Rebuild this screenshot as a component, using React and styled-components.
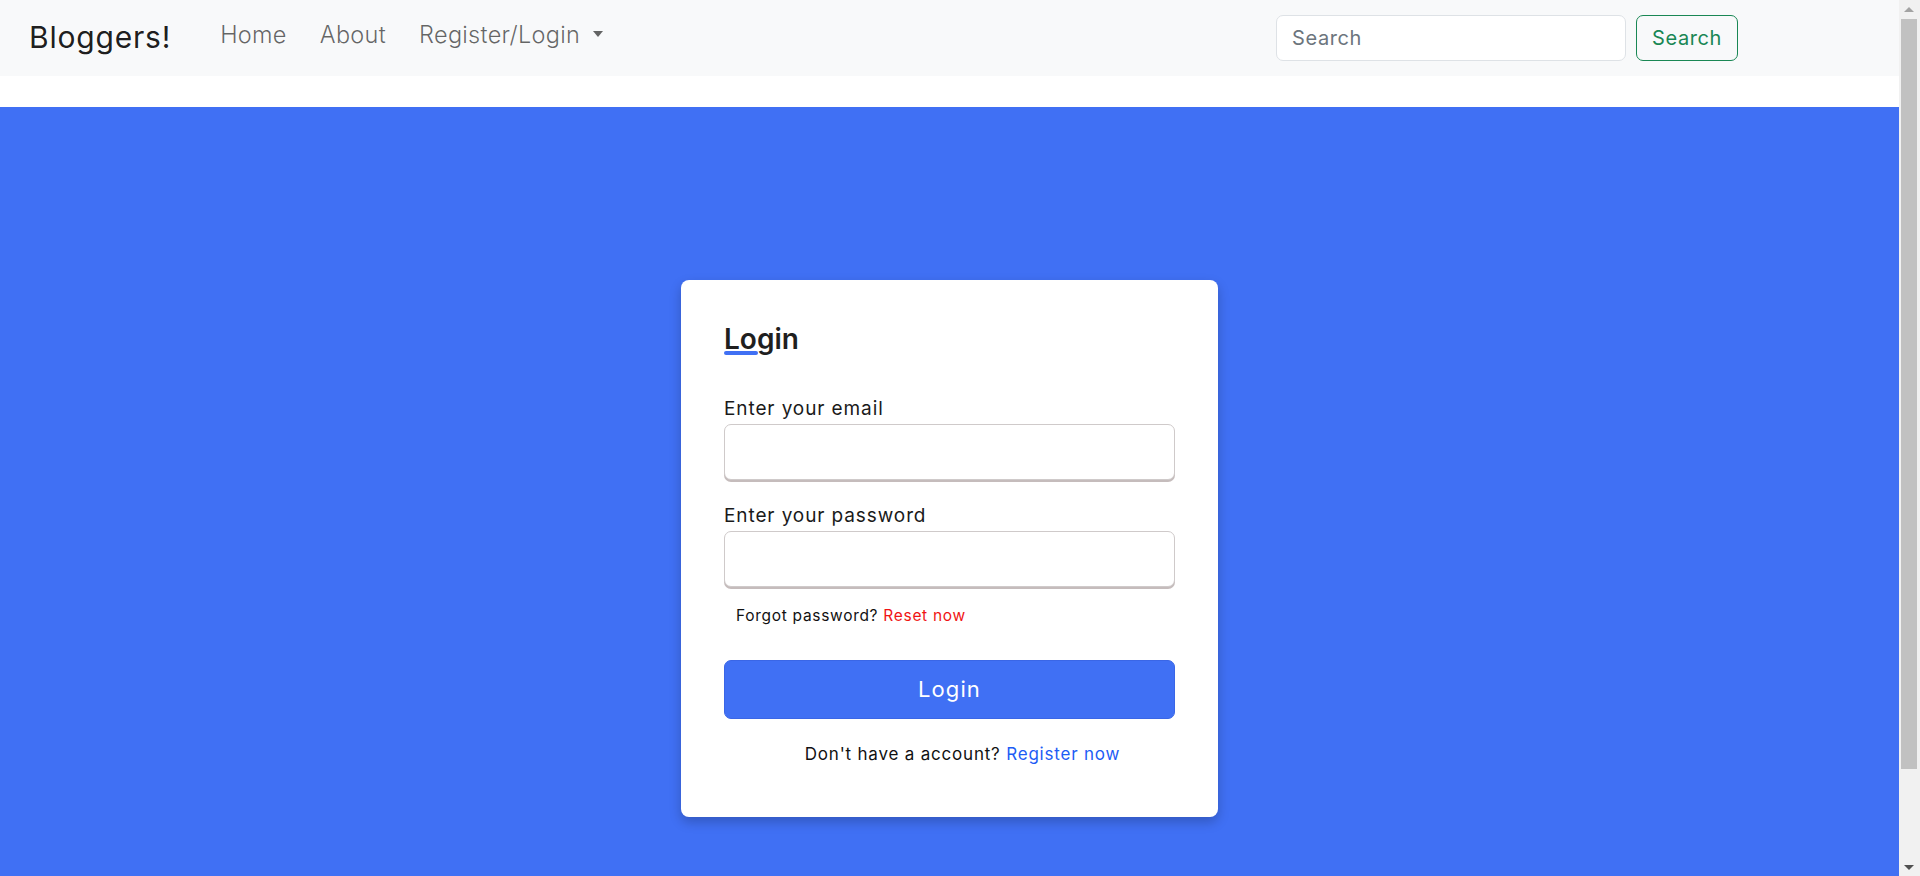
import React from "react";
import styled, { createGlobalStyle } from "styled-components";

const GlobalStyle = createGlobalStyle`
  html, body { margin: 0; padding: 0; }
  body {
    font-family: Inter, "Noto Sans", "Liberation Sans", sans-serif;
    color: #212529;
    background: #fff;
    padding-right: 21px;
  }
  *, *::before, *::after { box-sizing: border-box; }
`;

const Navbar = styled.nav`
  display: flex;
  align-items: center;
  height: 76px;
  padding: 0 161px 0 29px;
  background: #f8f9fa;
`;

const Brand = styled.a`
  font-size: 30px;
  font-weight: 400;
  letter-spacing: 0.8px;
  color: rgba(0, 0, 0, 0.9);
  text-decoration: none;
  margin-right: 49px;
  margin-top: -2px;
`;

const NavList = styled.ul`
  display: flex;
  align-items: center;
  gap: 33px;
  list-style: none;
  margin: -8px 0 0;
  padding: 0;
`;

const NavLink = styled.a`
  display: flex;
  align-items: center;
  font-size: 23.5px;
  font-weight: 300;
  letter-spacing: 0.3px;
  color: rgba(0, 0, 0, 0.6);
  text-decoration: none;
`;

const Caret = styled.span`
  display: inline-block;
  margin-left: 13px;
  width: 0;
  height: 0;
  border-top: 6px solid rgba(0, 0, 0, 0.6);
  border-left: 5.5px solid transparent;
  border-right: 5.5px solid transparent;
`;

const SearchForm = styled.form`
  display: flex;
  gap: 10px;
  margin-left: auto;
  margin-top: -1px;
`;

const SearchInput = styled.input`
  width: 350px;
  height: 46px;
  padding: 0 15px;
  border: 1px solid #dee2e6;
  border-radius: 7px;
  background: #fff;
  font-family: inherit;
  font-size: 20px;
  letter-spacing: 0.6px;
  color: #212529;
  outline: none;
  &::placeholder { color: #6c757d; }
`;

const OutlineButton = styled.button`
  width: 102px;
  height: 46px;
  border: 1px solid #198754;
  border-radius: 7px;
  background: transparent;
  color: #198754;
  font-family: inherit;
  font-size: 20px;
  letter-spacing: 0.6px;
`;

const Hero = styled.section`
  margin-top: 31px;
  padding-top: 6px;
  min-height: 100vh;
  background: #4070f4;
  display: flex;
  align-items: center;
  justify-content: center;
`;

const Card = styled.div`
  width: 537px;
  padding: 42px 43px 52px;
  background: #fff;
  border-radius: 8px;
  box-shadow: 0 5px 12px rgba(0, 0, 0, 0.22);
`;

const Title = styled.h2`
  position: relative;
  margin: 0;
  font-size: 28px;
  line-height: 34px;
  font-weight: 600;
  color: #1f1f1f;
  &::after {
    content: "";
    position: absolute;
    left: 0;
    bottom: 1px;
    width: 34px;
    height: 4px;
    border-radius: 2px;
    background: #4070f4;
  }
`;

const Form = styled.form`
  margin-top: 41px;
  display: flex;
  flex-direction: column;
`;

const Field = styled.div`
  display: flex;
  flex-direction: column;
  margin-top: ${(p) => (p.$first ? "0" : "24px")};
`;

const Label = styled.label`
  font-size: 19px;
  line-height: 24px;
  letter-spacing: 0.9px;
  color: #1a1a1a;
  margin-bottom: 3px;
`;

const TextInput = styled.input`
  height: 56px;
  width: 100%;
  padding: 0 14px;
  border: 1px solid #cfcaca;
  border-radius: 7px;
  box-shadow: 0 2px 0 #c5bcbc;
  font-family: inherit;
  font-size: 18px;
  outline: none;
  background: #fff;
`;

const Helper = styled.p`
  margin: 19px 0 0 12px;
  font-size: 15.5px;
  line-height: 20px;
  letter-spacing: 0.7px;
  color: #111;
`;

const TextLink = styled.a`
  color: ${(p) => p.$color};
  text-decoration: none;
`;

const PrimaryButton = styled.button`
  margin-top: 34px;
  height: 59px;
  width: 100%;
  border: 1px solid #3a66e6;
  border-radius: 7px;
  background: #4070f4;
  color: #fff;
  font-family: inherit;
  font-size: 22px;
  letter-spacing: 1.1px;
  font-weight: 400;
`;

const Footnote = styled.p`
  margin: 24px 0 0;
  padding-left: 26px;
  text-align: center;
  font-size: 17px;
  line-height: 22px;
  letter-spacing: 0.8px;
  color: #111;
`;

const Scrollbar = styled.div`
  position: fixed;
  top: 0;
  right: 0;
  width: 21px;
  height: 100vh;
  background: #f1f1f1;
`;

const Thumb = styled.div`
  position: absolute;
  top: 19px;
  left: 2px;
  right: 3px;
  height: 750px;
  background: #c1c1c1;
`;

const Arrow = styled.span`
  position: absolute;
  left: 5px;
  ${(p) => (p.$down ? "bottom: 6px;" : "top: 7px;")}
  width: 0;
  height: 0;
  border-left: 5px solid transparent;
  border-right: 5px solid transparent;
  ${(p) =>
    p.$down ? "border-top: 5px solid #505050;" : "border-bottom: 5px solid #a3a3a3;"}
`;

export default function App() {
  return (
    <>
      <GlobalStyle />
      <Navbar>
        <Brand href="#">Bloggers!</Brand>
        <NavList>
          <li><NavLink href="#">Home</NavLink></li>
          <li><NavLink href="#">About</NavLink></li>
          <li>
            <NavLink href="#">
              Register/Login
              <Caret />
            </NavLink>
          </li>
        </NavList>
        <SearchForm onSubmit={(e) => e.preventDefault()}>
          <SearchInput type="search" placeholder="Search" />
          <OutlineButton type="submit">Search</OutlineButton>
        </SearchForm>
      </Navbar>
      <Hero>
        <Card>
          <Title>Login</Title>
          <Form onSubmit={(e) => e.preventDefault()}>
            <Field $first>
              <Label>Enter your email</Label>
              <TextInput type="email" />
            </Field>
            <Field>
              <Label>Enter your password</Label>
              <TextInput type="password" />
            </Field>
            <Helper>
              Forgot password? <TextLink href="#" $color="#f01414">Reset now</TextLink>
            </Helper>
            <PrimaryButton type="submit">Login</PrimaryButton>
            <Footnote>
              Don't have a account? <TextLink href="#" $color="#1d5cf5">Register now</TextLink>
            </Footnote>
          </Form>
        </Card>
      </Hero>
      <Scrollbar aria-hidden="true">
        <Arrow />
        <Thumb />
        <Arrow $down />
      </Scrollbar>
    </>
  );
}
